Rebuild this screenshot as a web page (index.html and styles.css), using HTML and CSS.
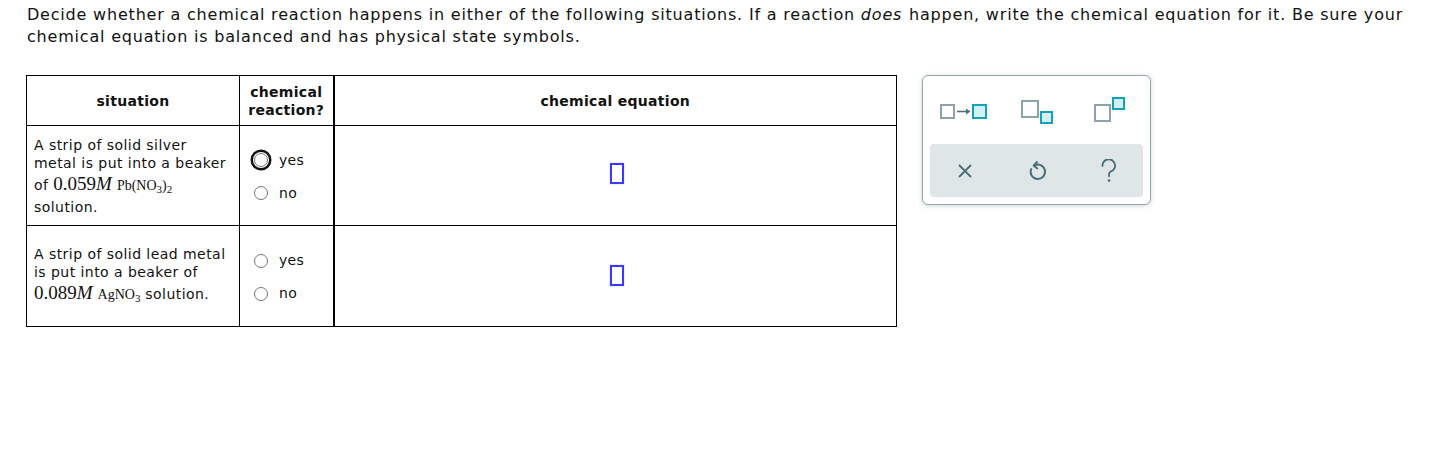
FILE: index.html
```html
<!DOCTYPE html>
<html>
<head>
<meta charset="utf-8">
<link rel="stylesheet" href="styles.css">
</head>
<body>
<div class="page">
  <p class="prompt">Decide whether a chemical reaction happens in either of the following situations. If a reaction <i>does</i> happen, write the chemical equation for it. Be sure your chemical equation is balanced and has physical state symbols.</p>
  <div class="work">
    <table class="grid">
      <thead>
        <tr>
          <th class="c1">situation</th>
          <th class="c2">chemical<br>reaction?</th>
          <th class="c3">chemical equation</th>
        </tr>
      </thead>
      <tbody>
        <tr class="r1">
          <td class="c1 sit">A strip of solid silver metal is put into a beaker of <span class="math"><span class="num">0.059</span><span class="mi">M</span><span class="chem">Pb(NO<sub>3</sub>)<sub>2</sub></span></span><br>solution.</td>
          <td class="c2">
            <div class="opts">
              <label class="opt"><span class="radio focus"></span>yes</label>
              <label class="opt"><span class="radio"></span>no</label>
            </div>
          </td>
          <td class="c3"><span class="slot"></span></td>
        </tr>
        <tr class="r2">
          <td class="c1 sit">A strip of solid lead metal is put into a beaker of <span class="math"><span class="num">0.089</span><span class="mi">M</span><span class="chem">AgNO<sub>3</sub></span></span> solution.</td>
          <td class="c2">
            <div class="opts">
              <label class="opt"><span class="radio"></span>yes</label>
              <label class="opt"><span class="radio"></span>no</label>
            </div>
          </td>
          <td class="c3"><span class="slot"></span></td>
        </tr>
      </tbody>
    </table>
    <div class="palette">
      <div class="tools">
        <button class="tool" title="reaction arrow">
          <svg width="48" height="17" viewBox="0 0 48 17">
            <rect x="1" y="1" width="13" height="13" fill="#fff" stroke="#8fa3ab" stroke-width="2"/>
            <line x1="17" y1="7.5" x2="28" y2="7.5" stroke="#4f6f7a" stroke-width="1.6"/>
            <path d="M26 4.5 L30.5 7.5 L26 10.5 Z" fill="#4f6f7a"/>
            <rect x="33" y="1" width="13" height="13" fill="#d3f0f5" stroke="#15a0bd" stroke-width="2"/>
          </svg>
        </button>
        <button class="tool" title="subscript">
          <svg width="34" height="26" viewBox="0 0 34 26">
            <rect x="1" y="1" width="16" height="16" fill="#fff" stroke="#8fa3ab" stroke-width="2"/>
            <rect x="20" y="12" width="11" height="11" fill="#d3f0f5" stroke="#15a0bd" stroke-width="2"/>
          </svg>
        </button>
        <button class="tool" title="superscript">
          <svg width="34" height="28" viewBox="0 0 34 28">
            <rect x="1" y="8" width="15" height="16" fill="#fff" stroke="#8fa3ab" stroke-width="2"/>
            <rect x="19" y="1" width="11" height="11" fill="#d3f0f5" stroke="#15a0bd" stroke-width="2"/>
          </svg>
        </button>
      </div>
      <div class="actions">
        <button class="act" title="clear">
          <svg width="16" height="16" viewBox="0 0 16 16"><path d="M2 2 L14 14 M14 2 L2 14" stroke="#4a6b78" stroke-width="1.8" fill="none"/></svg>
        </button>
        <button class="act" title="undo">
          <svg width="22" height="22" viewBox="0 0 22 22"><path d="M8.2 5.6 A7.2 7.2 0 1 1 5.2 9" stroke="#4a6b78" stroke-width="1.9" fill="none" stroke-linecap="round"/><path d="M11 2 L7.6 5.6 L11.3 8.4" stroke="#4a6b78" stroke-width="1.9" fill="none" stroke-linecap="round" stroke-linejoin="round"/></svg>
        </button>
        <button class="act" title="help">
          <svg width="18" height="24" viewBox="0 0 18 24"><path d="M2.5 7 A6.3 6.3 0 1 1 10.6 12.6 C9.4 13.3 9 14.2 9 15.5 V17.2" stroke="#4a6b78" stroke-width="1.8" fill="none" stroke-linecap="round"/><circle cx="9" cy="21.6" r="1.3" fill="#4a6b78"/></svg>
        </button>
      </div>
    </div>
  </div>
</div>
</body>
</html>
```

FILE: styles.css
```css
* { box-sizing: border-box; }
html, body { margin: 0; padding: 0; background: #fff; }
body {
  font-family: "DejaVu Sans", Verdana, sans-serif;
  color: #000;
}
.page {
  width: 1440px;
  height: 467px;
  padding: 4px 0 0 27px;
}
.prompt {
  margin: 0;
  font-size: 16px;
  letter-spacing: 0.8px;
  line-height: 22px;
  width: 1400px;
  color: #111;
}
.prompt i { padding-right: 1px; }
.work {
  display: flex;
  align-items: flex-start;
  gap: 25px;
  margin-top: 27px;
  margin-left: -1px;
}
.grid {
  border-collapse: collapse;
  border: 1px solid #000;
  letter-spacing: 0.3px;
}
.grid th, .grid td {
  border: 1px solid #000;
  padding: 0;
}
.grid th {
  font-weight: bold;
  font-size: 14px;
  line-height: 18px;
  height: 50px;
  text-align: center;
  vertical-align: middle;
  color: #111;
}
.grid .c1 { width: 213px; }
.grid .c2 { width: 94px; border-right: 2px solid #000; vertical-align: middle; }
.grid .c3 { width: 563px; text-align: center; vertical-align: middle; }
.r1 td { height: 100px; }
.r2 td { height: 101px; }
.sit {
  padding: 0 6px 0 7px !important;
  font-size: 14px;
  letter-spacing: 0.45px;
  line-height: 18px;
  vertical-align: middle;
  color: #111;
}
.math {
  display: inline-block;
  white-space: nowrap;
  letter-spacing: 0;
  padding: 3px 0 3px;
  line-height: 18px;
}
.num {
  font-family: "Liberation Serif", "Times New Roman", serif;
  font-size: 19px;
}
.mi {
  font-family: "Liberation Serif", "Times New Roman", serif;
  font-style: italic;
  font-size: 19px;
  padding-right: 5px;
}
.chem {
  font-family: "Liberation Serif", "Times New Roman", serif;
  font-size: 14px;
}
.chem sub { font-size: 11px; vertical-align: -3px; line-height: 0; }
.opts {
  display: flex;
  flex-direction: column;
  gap: 14px;
  padding-left: 14px;
  padding-top: 2px;
}
.opt {
  display: flex;
  align-items: center;
  font-size: 14px;
  line-height: 19px;
  height: 19px;
  color: #111;
}
.radio {
  width: 14px;
  height: 14px;
  border: 1px solid #767676;
  border-radius: 50%;
  margin-right: 11px;
  flex: none;
  background: #fff;
}
.radio.focus {
  box-shadow: 0 0 0 1px #fff, 0 0 0 3.5px #111;
}
.grid td.c3 { line-height: 0; font-size: 0; }
.r1 td.c3 { padding-bottom: 4px; }
.r2 td.c3 { padding-bottom: 2px; }
.slot {
  display: inline-block;
  width: 14px;
  height: 21px;
  border: 2px solid #3a3aff;
  box-shadow: 0 0 1px #9999ff;
  vertical-align: middle;
  margin-left: 3px;
}
.palette {
  width: 229px;
  height: 130px;
  border: 1px solid #90a4ab;
  border-radius: 6px;
  box-shadow: 0 1px 5px rgba(80, 110, 120, 0.25);
  padding: 0 7px 7px 7px;
  display: flex;
  flex-direction: column;
  background: #fff;
}
.tools, .actions {
  display: grid;
  grid-template-columns: repeat(3, 1fr);
  align-items: center;
  justify-items: center;
}
.tools { height: 68px; }
.actions {
  flex: 1;
  background: #dfe6e8;
  border-radius: 4px;
}
button {
  border: 0;
  background: transparent;
  padding: 0;
  display: flex;
  align-items: center;
  justify-content: center;
}
.tool:nth-child(1) svg { margin-left: -3px; margin-top: 4px; }
.tool:nth-child(2) svg { margin-left: 3px; margin-top: 6px; }
.tool:nth-child(3) svg { margin-left: 6px; margin-top: 2px; }
.act:nth-child(1) svg { margin-left: -2px; }
.act:nth-child(3) svg { margin-left: 3px; }
```
